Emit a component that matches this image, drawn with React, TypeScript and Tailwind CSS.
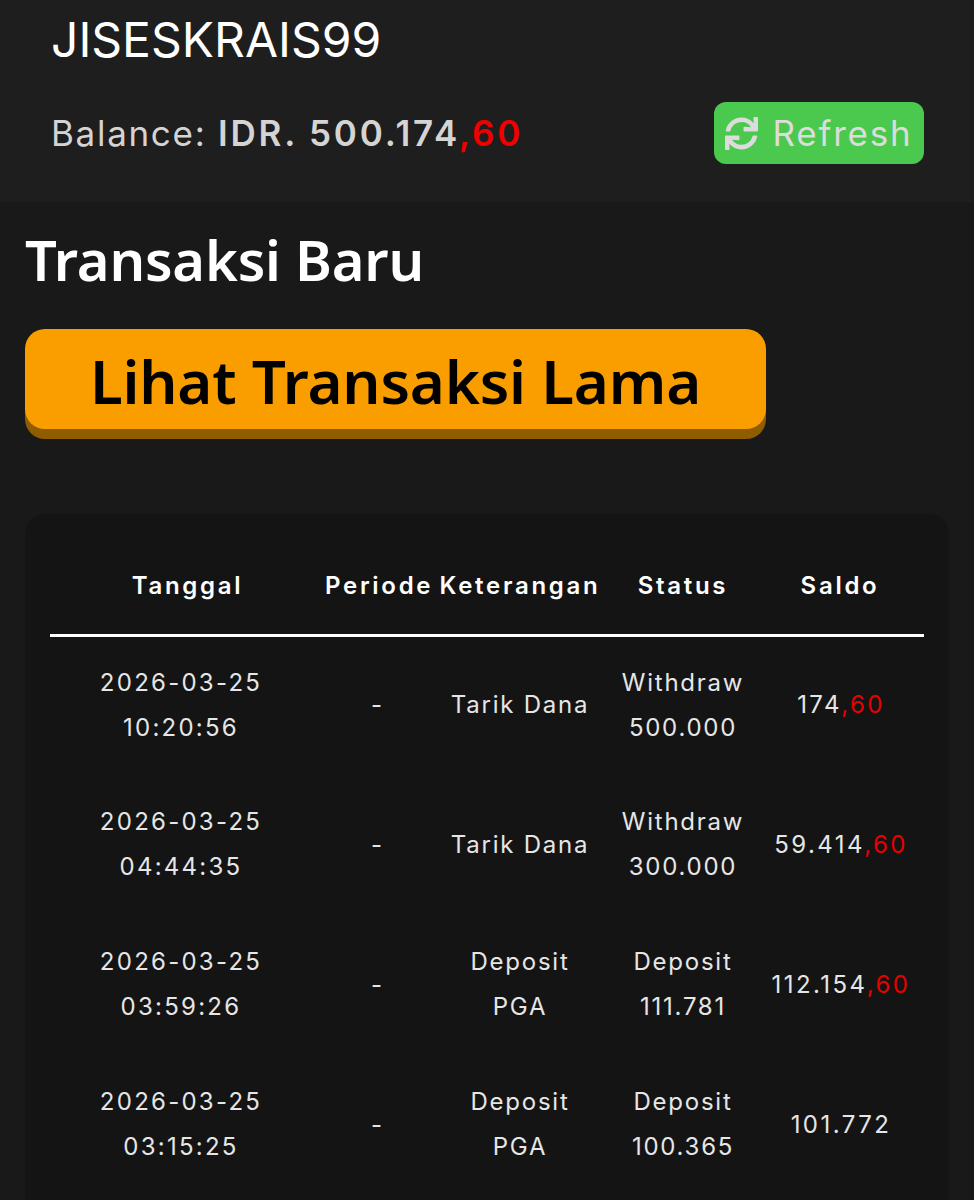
import React from 'react';
import { FaSync } from 'react-icons/fa';

interface Row {
  date: string;
  time: string;
  info: string[];
  status: string[];
  saldo: string;
  cents?: string;
}

const rows: Row[] = [
  { date: '2026-03-25', time: '10:20:56', info: ['Tarik Dana'], status: ['Withdraw', '500.000'], saldo: '174', cents: ',60' },
  { date: '2026-03-25', time: '04:44:35', info: ['Tarik Dana'], status: ['Withdraw', '300.000'], saldo: '59.414', cents: ',60' },
  { date: '2026-03-25', time: '03:59:26', info: ['Deposit', 'PGA'], status: ['Deposit', '111.781'], saldo: '112.154', cents: ',60' },
  { date: '2026-03-25', time: '03:15:25', info: ['Deposit', 'PGA'], status: ['Deposit', '100.365'], saldo: '101.772' },
];

const App: React.FC = () => {
  return (
    <div className="h-[1200px] overflow-hidden bg-[#191919] font-['Inter',sans-serif]">
      {/* Header akun */}
      <div className="h-[202px] bg-[#1e1e1e] pl-[51px] pr-[50px]">
        <div className="h-[83px] text-[48px] leading-[80px] tracking-[0px] text-white">JISESKRAIS99</div>
        <div className="mt-[19px] flex h-[62px] items-center justify-between">
          <div className="text-[35px] tracking-[1.7px] text-[#d4d4d4]">
            Balance: <span className="font-semibold tracking-[2.8px]">IDR. 500.174</span>
            <span className="font-semibold tracking-[2.8px] text-[#f00000]">,60</span>
          </div>
          <button className="flex h-[62px] w-[210px] items-center justify-center gap-[14px] rounded-[12px] bg-[#4bc94f] text-[35px] tracking-[1.8px] text-[#dcdcdc]">
            <FaSync className="h-[33px] w-[33px]" />
            Refresh
          </button>
        </div>
      </div>

      <div className="px-[25px]">
        <h1 className="mt-[24px] h-[68px] font-['Noto_Sans',sans-serif] text-[56px] leading-[66px] font-semibold tracking-[-0.2px] text-white">
          Transaksi Baru
        </h1>

        <button className="mt-[35px] block h-[100px] w-[741px] rounded-[20px] bg-[#fa9e00] pt-[3px] font-['Noto_Sans',sans-serif] text-[60px] font-semibold tracking-[-0.2px] text-black shadow-[0_10px_0_#8f5c00]">
          Lihat Transaksi Lama
        </button>

        {/* Tabel transaksi */}
        <div className="mt-[85px] rounded-[20px] bg-[#141414] px-[25px] pb-[40px]">
          <table className="w-[874px] table-fixed border-collapse text-center text-white">
            <colgroup>
              <col className="w-[275px]" />
              <col className="w-[105px]" />
              <col className="w-[180px]" />
              <col className="w-[146px]" />
              <col className="w-[168px]" />
            </colgroup>
            <thead>
              <tr className="h-[121px] border-b-[3px] border-white text-[24px] tracking-[2.7px]">
                <th className="pt-[24px] font-semibold">Tanggal</th>
                <th className="pt-[24px] font-semibold whitespace-nowrap">Periode</th>
                <th className="pt-[24px] font-semibold whitespace-nowrap">Keterangan</th>
                <th className="pt-[24px] font-semibold">Status</th>
                <th className="pt-[24px] font-semibold">Saldo</th>
              </tr>
            </thead>
            <tbody className="text-[24px] leading-[45px] tracking-[1.75px] text-[#e6e6e6]">
              {rows.map((row) => (
                <tr key={row.time} className="h-[140px]">
                  <td className="pr-[13px] pb-[2px] tracking-[2.25px]">
                    <div>{row.date}</div>
                    <div>{row.time}</div>
                  </td>
                  <td className="pb-[2px]">-</td>
                  <td className="pb-[2px]">
                    {row.info.map((line) => (
                      <div key={line}>{line}</div>
                    ))}
                  </td>
                  <td className="pb-[2px]">
                    {row.status.map((line) => (
                      <div key={line}>{line}</div>
                    ))}
                  </td>
                  <td className="pb-[2px] pl-[2px] tracking-[2.45px]">
                    {row.saldo}
                    {row.cents && <span className="text-[#e60000]">{row.cents}</span>}
                  </td>
                </tr>
              ))}
            </tbody>
          </table>
        </div>
      </div>
    </div>
  );
};

export default App;
